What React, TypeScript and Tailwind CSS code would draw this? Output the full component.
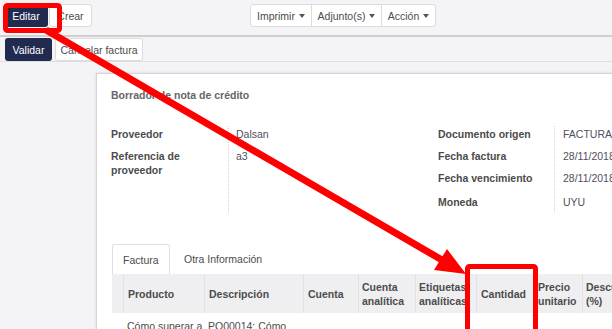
import React from "react";

const Caret = () => (
  <span className="inline-block w-0 h-0 ml-[4px] border-x-[3.5px] border-x-transparent border-t-[4px] border-t-[#555] align-middle" />
);

export default function App() {
  return (
    <div className="relative w-[612px] h-[329px] overflow-hidden bg-[#f4f4f7] font-['Liberation_Sans',Arial,sans-serif] text-[10.5px] leading-[14px] text-[#4c4c4c]">
      {/* Control panel */}
      <div className="flex items-start h-[35px] pt-[4px]">
        <div className="ml-[4px] flex gap-[1px] shrink-0">
          <div className="h-[23px] w-[44px] rounded-[3px] bg-[#212a4f] text-white flex items-center justify-center">Editar</div>
          <div className="h-[23px] w-[43px] rounded-[3px] bg-white border border-[#dcdcdc] flex items-center justify-center">Crear</div>
        </div>
        <div className="ml-[158px] flex h-[23px] bg-white border border-[#dcdcdc] rounded-[3px] shrink-0">
          <div className="w-[61px] flex items-center justify-center border-r border-[#dcdcdc]">Imprimir<Caret /></div>
          <div className="w-[70px] flex items-center justify-center border-r border-[#dcdcdc]">Adjunto(s)<Caret /></div>
          <div className="w-[53px] flex items-center justify-center">Acción<Caret /></div>
        </div>
      </div>
      <div className="h-[27px] border-t-2 border-[#cfcfd2] border-b border-b-[#dedee2] flex items-start pt-[1px] pl-[5px] gap-[3px]">
        <div className="h-[23px] w-[47px] rounded-[3px] bg-[#212a4f] text-white flex items-center justify-center">Validar</div>
        <div className="h-[23px] w-[88px] rounded-[3px] bg-white border border-[#dcdcdc] flex items-center justify-center">Cancelar factura</div>
      </div>

      {/* Sheet */}
      <div className="ml-[96px] mt-[11px] w-[640px] h-[300px] bg-white border-l border-t border-[#d6d6da] shadow-[0_0_3px_rgba(0,0,0,0.12)] pl-[14px]">
        <div className="pt-[14px] h-[52px] font-bold text-[#666]">Borrador de nota de crédito</div>
        <div className="flex">
          {/* left group */}
          <div className="w-[327px] flex shrink-0">
            <div className="w-[118px] shrink-0 border-r border-dotted border-[#d4d4d8] font-bold">
              <div className="h-[22px] pt-[1px]">Proveedor</div>
              <div className="h-[33px] pt-[1px]">Referencia de<br />proveedor</div>
            </div>
            <div className="pl-[7px] text-[#4f4f60]">
              <div className="h-[22px] pt-[1px]">Dalsan</div>
              <div className="h-[33px] pt-[1px]">a3</div>
            </div>
          </div>
          {/* right group */}
          <div className="flex shrink-0">
            <div className="w-[117px] shrink-0 border-r border-dotted border-[#d4d4d8] font-bold">
              <div className="h-[22px] pt-[1px]">Documento origen</div>
              <div className="h-[22px] pt-[1px]">Fecha factura</div>
              <div className="h-[22px] pt-[1px]">Fecha vencimiento</div>
              <div className="h-[21px] pt-[3px]">Moneda</div>
            </div>
            <div className="pl-[8px] text-[#4f4f60] whitespace-nowrap">
              <div className="h-[22px] pt-[1px]">FACTURA/2018/0001</div>
              <div className="h-[22px] pt-[1px]">28/11/2018</div>
              <div className="h-[22px] pt-[1px]">28/11/2018</div>
              <div className="h-[21px] pt-[3px]">UYU</div>
            </div>
          </div>
        </div>

        {/* Tabs */}
        <div className="mt-[31px] ml-[1px] flex items-end h-[30px]">
          <div className="h-[30px] w-[58px] border border-b-0 border-[#e0e0e4] rounded-t-[3px] bg-white flex items-center pl-[10px]">Factura</div>
          <div className="h-[30px] flex items-center pl-[14px]">Otra Información</div>
        </div>

        {/* Table */}
        <div className="ml-[1px] whitespace-nowrap">
          <div className="flex h-[39px] bg-[#efeff2] font-bold items-center">
            <div className="w-[11px] shrink-0 h-full" />
            <div className="w-[81px] shrink-0 h-full flex items-center pl-[4px] border-l border-[#e2e2e6]">Producto</div>
            <div className="w-[99px] shrink-0 h-full flex items-center pl-[4px] border-l border-[#e2e2e6]">Descripción</div>
            <div className="w-[55px] shrink-0 h-full flex items-center pl-[4px] border-l border-[#e2e2e6]">Cuenta</div>
            <div className="w-[57px] shrink-0 h-full flex items-center pl-[3px] border-l border-[#e2e2e6]">Cuenta<br />analítica</div>
            <div className="w-[61px] shrink-0 h-full flex items-center pl-[3px] border-l border-[#e2e2e6]">Etiquetas<br />analíticas</div>
            <div className="w-[58px] shrink-0 h-full flex items-center pl-[4px] border-l border-[#e2e2e6]">Cantidad</div>
            <div className="w-[48px] shrink-0 h-full flex items-center pl-[3px] border-l border-[#e2e2e6]">Precio<br />unitario</div>
            <div className="w-[60px] shrink-0 h-full flex items-center pl-[3px] border-l border-[#e2e2e6]">Descuento<br />(%)</div>
          </div>
          <div className="flex items-center h-[40px]">
            <div className="w-[11px] shrink-0" />
            <div className="w-[81px] shrink-0 pl-[4px] self-start pt-[6px]">Cómo superar a<br />la competencia</div>
            <div className="w-[99px] shrink-0 pl-[4px] self-start pt-[6px]">PO00014: Cómo<br />superar a la</div>
            <div className="w-[55px] shrink-0 pl-[4px]">510000</div>
          </div>
        </div>
      </div>

      {/* Red annotations */}
      <svg className="absolute inset-0 pointer-events-none" width="612" height="329" viewBox="0 0 612 329">
        <line x1="46" y1="30" x2="442" y2="260" stroke="#ff0000" strokeWidth="7" />
        <rect x="5.5" y="5.5" width="54" height="25" rx="2" fill="none" stroke="#ff0000" strokeWidth="5" />
        <polygon points="466,274 434,270 447,249" fill="#ff0000" />
        <rect x="467.5" y="266.5" width="68" height="80" rx="2" fill="none" stroke="#ff0000" strokeWidth="5" />
      </svg>
    </div>
  );
}
